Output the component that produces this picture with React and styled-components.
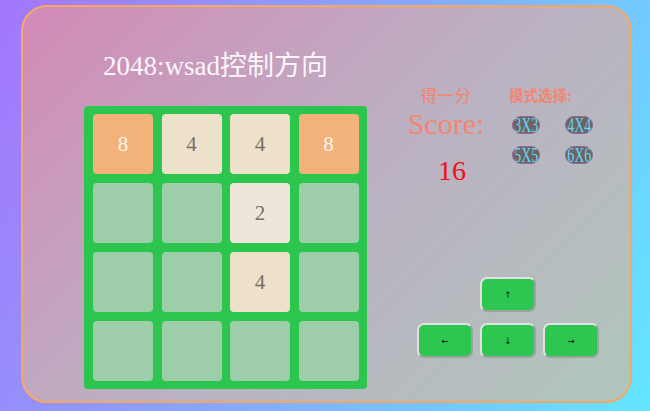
import React, { useState } from "react";
import styled, { createGlobalStyle } from "styled-components";

const GlobalStyle = createGlobalStyle`
  html, body {
    margin: 0;
    padding: 0;
  }
  body {
    font-family: "Liberation Serif", "Noto Sans CJK SC", serif;
  }
`;

const initialBoard = [
  [8, 4, 4, 8],
  [0, 0, 2, 0],
  [0, 0, 4, 0],
  [0, 0, 0, 0],
];

const tileColors = {
  0: { bg: "#9dcda9", fg: "transparent" },
  2: { bg: "#eee5db", fg: "#776e65" },
  4: { bg: "#eee1c9", fg: "#776e65" },
  8: { bg: "#f3b27a", fg: "#f9f6f2" },
};

function App() {
  const [board] = useState(initialBoard);
  const [score] = useState(16);
  const modes = ["3X3", "4X4", "5X5", "6X6"];

  return (
    <Page>
      <GlobalStyle />
      <Card>
        <LeftSide>
          <Title>2048:wsad控制方向</Title>
          <Board>
            {board.flat().map((value, i) => (
              <Tile key={i} $value={value}>
                {value ? value : ""}
              </Tile>
            ))}
          </Board>
        </LeftSide>
        <RightSide>
          <Info>
            <ScoreBox>
              <ScoreLabel>得一分</ScoreLabel>
              <ScoreTitle>Score:</ScoreTitle>
              <ScoreValue>{score}</ScoreValue>
            </ScoreBox>
            <ModeBox>
              <ModeLabel>模式选择:</ModeLabel>
              <ModeGrid>
                {modes.map((m) => (
                  <ModeButton key={m}>
                    <ModeText>{m}</ModeText>
                  </ModeButton>
                ))}
              </ModeGrid>
            </ModeBox>
          </Info>
          <Controls>
            <ArrowButton>↑</ArrowButton>
            <ArrowRow>
              <ArrowButton>←</ArrowButton>
              <ArrowButton>↓</ArrowButton>
              <ArrowButton>→</ArrowButton>
            </ArrowRow>
          </Controls>
        </RightSide>
      </Card>
    </Page>
  );
}

const Page = styled.div`
  width: 650px;
  height: 411px;
  box-sizing: border-box;
  padding: 5px 18px 8px 21px;
  background: linear-gradient(115deg, #a476fc 0%, #86a9fd 50%, #62e6ff 100%);
`;

const Card = styled.div`
  width: 611px;
  height: 398px;
  box-sizing: border-box;
  border: 2.5px solid #f5a865;
  border-radius: 26px;
  background: linear-gradient(135deg, #d38ab8 0%, #bcb0c2 50%, #b0c6bc 100%);
  padding: 43px 0 0 61px;
  display: flex;
`;

const LeftSide = styled.div`
  display: flex;
  flex-direction: column;
`;

const Title = styled.h1`
  margin: 0 0 24px 19px;
  font-size: 27px;
  line-height: 32px;
  font-weight: normal;
  color: #fbf6fa;
  white-space: nowrap;
`;

const Board = styled.div`
  width: 283px;
  height: 283px;
  box-sizing: border-box;
  padding: 8px 8px 8px 9px;
  background: #2cc64f;
  border-radius: 4px;
  display: grid;
  grid-template-columns: repeat(4, 60px);
  grid-template-rows: repeat(4, 60px);
  gap: 9px 8.5px;
`;

const Tile = styled.div`
  border-radius: 4px;
  background: ${(p) => tileColors[p.$value].bg};
  color: ${(p) => tileColors[p.$value].fg};
  display: flex;
  align-items: center;
  justify-content: center;
  font-size: 21px;
`;

const RightSide = styled.div`
  margin-left: 39px;
  padding-top: 32px;
  display: flex;
  flex-direction: column;
`;

const Info = styled.div`
  display: flex;
  gap: 23px;
`;

const ScoreBox = styled.div`
  width: 80px;
  display: flex;
  flex-direction: column;
  align-items: center;
`;

const ScoreLabel = styled.div`
  font-family: "Noto Sans CJK SC", sans-serif;
  font-size: 17px;
  line-height: 25px;
  color: #f2846f;
`;

const ScoreTitle = styled.div`
  font-size: 30px;
  line-height: 30px;
  margin-top: 2px;
  color: #f4866f;
  white-space: nowrap;
`;

const ScoreValue = styled.div`
  font-size: 28px;
  line-height: 30px;
  color: #f40f16;
  margin-top: 17px;
  margin-left: 12px;
`;

const ModeBox = styled.div`
  display: flex;
  flex-direction: column;
  padding-top: 5px;
`;

const ModeLabel = styled.div`
  font-family: "Noto Sans CJK SC", sans-serif;
  font-size: 14.5px;
  line-height: 16px;
  font-weight: 600;
  color: #f28572;
  white-space: nowrap;
`;

const ModeGrid = styled.div`
  margin: 13px 0 0 3px;
  display: grid;
  grid-template-columns: 28px 28px;
  column-gap: 25px;
  row-gap: 12px;
`;

const ModeButton = styled.button`
  width: 28px;
  height: 18px;
  padding: 0;
  border: 1px solid #8e6a9a;
  border-radius: 9px;
  background: #6f6264;
  color: #5fd8f2;
  font-family: "Liberation Serif", serif;
  font-size: 20px;
  line-height: 16px;
  cursor: pointer;
  white-space: nowrap;
  overflow: visible;
  display: flex;
  align-items: center;
  justify-content: center;
`;

const ModeText = styled.span`
  display: inline-block;
  transform: scaleX(0.7);
`;

const Controls = styled.div`
  margin: 91px 0 0 11px;
  width: 182px;
  display: flex;
  flex-direction: column;
  align-items: center;
  gap: 11px;
`;

const ArrowRow = styled.div`
  display: flex;
  gap: 7px;
`;

const ArrowButton = styled.button`
  width: 56px;
  height: 35px;
  box-sizing: border-box;
  padding: 0;
  border: 2px solid #e2e2e2;
  border-right-color: #9aa39c;
  border-bottom-color: #9aa39c;
  border-radius: 7px;
  background: #2dc650;
  color: #111;
  font-family: "DejaVu Sans", sans-serif;
  font-size: 9px;
  cursor: pointer;
`;

export default App;
